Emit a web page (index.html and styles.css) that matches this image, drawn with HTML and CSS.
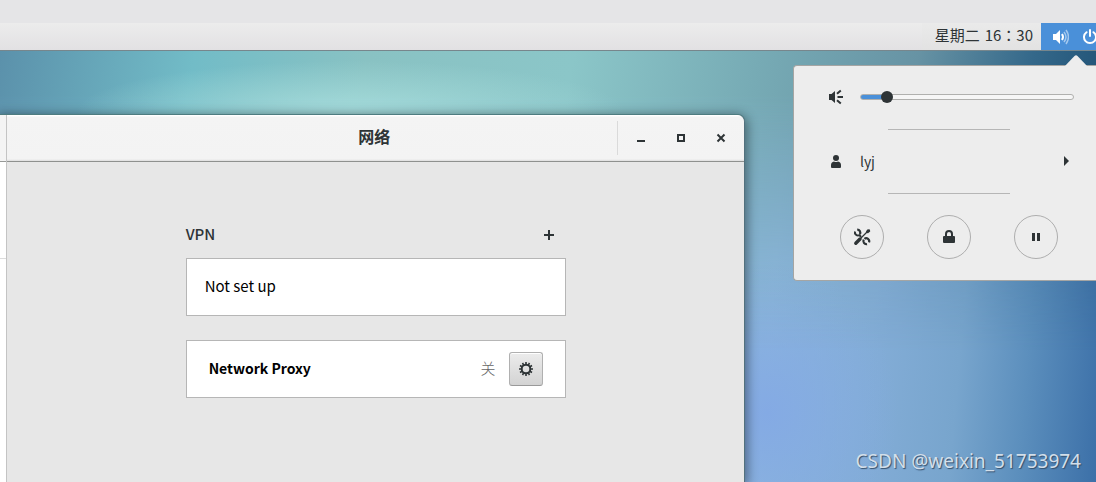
FILE: index.html
```html
<!DOCTYPE html>
<html lang="zh-CN">

<head>
<meta charset="utf-8">
<title>网络</title>
<meta name="viewport" content="width=device-width, initial-scale=1">
<link rel="stylesheet" href="styles.css">
</head>

<body>

<div class="strip"></div>

<header class="panel">
  <button class="clock" type="button" lang="zh-TW"><span>星期二</span><span>16：30</span></button>
  <button class="status" type="button" aria-label="System menu">
    <svg width="16" height="16" viewBox="0 0 16 16">
      <path d="M0 5h3l4-4v14l-4-4H0z" fill="#fff"/>
      <path d="M9 5q2 3 0 6" fill="none" stroke="#fff" stroke-width="2"/>
      <path d="M11 3q4 5 0 10M13 1q5 7 0 14" fill="none" stroke="#a4c8ee" stroke-width="1.5"/>
    </svg>
    <svg width="16" height="16" viewBox="0 0 16 16">
      <path d="M4.500 3.200a6 6 0 1 0 7 0M8 1v6" fill="none" stroke="#fff" stroke-width="2" stroke-linecap="round"/>
    </svg>
  </button>
</header>

<main class="desktop">

  <section class="window">
    <div class="sidebar">
      <div class="sidebar-head"></div>
      <div class="sidebar-item"></div>
    </div>
    <div class="content">
      <div class="titlebar">
        <h1 class="title">网络</h1>
        <div class="win-buttons">
          <button type="button" aria-label="Minimize">
            <svg width="16" height="16" viewBox="0 0 16 16"><path d="M4 10h8v2H4z"/></svg>
          </button>
          <button type="button" aria-label="Maximize">
            <svg width="16" height="16" viewBox="0 0 16 16"><path d="M4 4h8v8H4zM6 6v4h4V6z" fill-rule="evenodd"/></svg>
          </button>
          <button type="button" aria-label="Close">
            <svg width="16" height="16" viewBox="0 0 16 16"><path d="M4.500 4.500l7 7M11.500 4.500l-7 7" stroke="#2e3436" stroke-width="2"/></svg>
          </button>
        </div>
      </div>

      <div class="settings">
        <div class="group-head">
          <h2>VPN</h2>
          <button class="add" type="button" aria-label="Add VPN">
            <svg width="16" height="16" viewBox="0 0 16 16"><path d="M7 3h2v4h4v2H9v4H7V9H3V7h4z"/></svg>
          </button>
        </div>
        <div class="card">Not set up</div>
        <div class="card proxy">
          <span class="proxy-name">Network Proxy</span>
          <span class="proxy-state">关</span>
          <button class="gear" type="button" aria-label="Proxy settings">
            <svg width="16" height="16" viewBox="0 0 16 16">
              <circle cx="8" cy="8" r="4.300" fill="none" stroke="#2e3436" stroke-width="2"/>
              <path d="M8 1v2.500M8 12.500V15M1 8h2.500M12.500 8H15M4.500 2l1.200 2.100M11.500 2l-1.200 2.100M4.500 14l1.200-2.100M11.500 14l-1.200-2.100M2 4.500l2.100 1.200M14 4.500l-2.100 1.200M2 11.500l2.100-1.200M14 11.500l-2.100-1.200" fill="none" stroke="#2e3436" stroke-width="1.600"/>
            </svg>
          </button>
        </div>
      </div>
    </div>
  </section>

  <section class="menu">
    <svg class="arrow" width="24" height="13" viewBox="0 0 24 13">
      <path d="M0 13L10.500 2q1.500-1.500 3 0L24 13z" fill="#ededed"/>
    </svg>
    <div class="row volume">
      <label for="volume" aria-label="Volume">
        <svg width="16" height="16" viewBox="0 0 16 16">
          <path d="M1 5h2.500L7 2v12l-3.500-3H1z"/>
          <path d="M9.500 8H15M9 4.800L12.800 1.500M9 11.200l3.800 3.300" stroke="#2e3436" stroke-width="2"/>
        </svg>
      </label>
      <input class="slider" id="volume" type="range" min="0" max="100" value="10">
    </div>
    <hr>
    <button class="row user" type="button">
      <svg width="16" height="16" viewBox="0 0 16 16">
        <circle cx="8" cy="5" r="3"/>
        <path d="M3 15v-3q0-3 3-3.500q2 1 4 0q3 .5 3 3.500v2q0 1-1 1H4q-1 0-1-1z"/>
      </svg>
      <span class="user-name">lyj</span>
      <svg class="expand" width="16" height="16" viewBox="0 0 16 16"><path d="M6 3l5 5-5 5z"/></svg>
    </button>
    <hr>
    <div class="actions">
      <button type="button" aria-label="Settings">
        <svg width="18" height="18" viewBox="0 0 18 18">
          <path d="M2 3.500a3.200 3.200 0 0 0 4.500 3.700l1.600 1.700" fill="none" stroke="#2e3436" stroke-width="2"/>
          <path d="M4.200 1.600a3 3 0 0 1 2.600 4.600" fill="none" stroke="#2e3436" stroke-width="2.200"/>
          <path d="M16 14.300a3 3 0 0 0-4.600-3.500" fill="none" stroke="#2e3436" stroke-width="2.200"/>
          <path d="M10.800 11.600a3 3 0 0 0 3.200 4.500" fill="none" stroke="#2e3436" stroke-width="2.200"/>
          <path d="M7 11L2.800 15.200" stroke="#2e3436" stroke-width="3.400" stroke-linecap="round"/>
          <path d="M7.500 10.500L14 4" stroke="#2e3436" stroke-width="1.300"/>
          <path d="M13 3.300l1.700-2 2.200.3.300 2-2.200 1.700-1.500-.4z"/>
        </svg>
      </button>
      <button type="button" aria-label="Lock">
        <svg width="16" height="16" viewBox="0 0 16 16">
          <path d="M2 8q0-1 1-1h10q1 0 1 1v5q0 1-1 1H3q-1 0-1-1z"/>
          <path d="M5 8V5q0-3 3-3t3 3v3" fill="none" stroke="#2e3436" stroke-width="2"/>
        </svg>
      </button>
      <button type="button" aria-label="Suspend">
        <svg width="16" height="16" viewBox="0 0 16 16"><path d="M4 4h3v8H4zM9 4h3v8H9z"/></svg>
      </button>
    </div>
  </section>

  <p class="watermark">CSDN @weixin_51753974</p>

</main>

</body>

</html>
```
FILE: styles.css
```css
* {
  box-sizing: border-box;
}

body {
  margin: 0;
  min-height: 100vh;
  display: flex;
  flex-direction: column;
  overflow: hidden;
  font-family: "Noto Sans CJK SC", "Noto Sans", sans-serif;
  font-size: 15px;
  line-height: 20px;
  color: #2e3436;
}

svg {
  display: block;
  flex: none;
  fill: #2e3436;
}

button {
  margin: 0;
  padding: 0;
  border: none;
  background: none;
  font: inherit;
  color: inherit;
  cursor: pointer;
}

/* top panel */

.strip {
  height: 23px;
  background-color: #e5e5e7;
}

.panel {
  display: flex;
  justify-content: flex-end;
  height: 28px;
  border-bottom: 1px solid #77868c;
  background: linear-gradient(#ececec, #e2e1e3);
}

.clock {
  display: flex;
  align-items: center;
  gap: 5px;
  padding: 0 8px 4px 13px;
  background: linear-gradient(#eaeaea, #e2e2e2);
  font-family: "Noto Sans CJK TC", sans-serif;
}

.status {
  display: flex;
  align-items: center;
  gap: 13px;
  width: 55px;
  padding-left: 12px;
  overflow: hidden;
  background-color: #4a90d9;
}

/* desktop and wallpaper */

.desktop {
  position: relative;
  flex: 1;
  overflow: hidden;
  background:
    radial-gradient(ellipse 12% 35% at 70% 84%, #84aae4 0%, transparent 100%),
    linear-gradient(95deg, #83b6d2 60%, #8cb6dc 70%, #82acd6 80%, #78a5cd 87%, #5c8fbd 93%, #3c70a8 100%);
}

.desktop::before {
  content: "";
  position: absolute;
  inset: 0 0 auto 0;
  height: 300px;
  background:
    radial-gradient(ellipse 25% 50px at 32% 60px, #a4dbda 0%, transparent 100%),
    linear-gradient(100deg, #5b91ab 0%, #72bcc7 17%, #89c2c3 32%, #8bc6c8 50%, #77abb5 66%, #6793a4 80%, #34688a 90%, #1c4c70 99%);
  -webkit-mask-image: linear-gradient(#000 15%, rgba(0, 0, 0, .2) 70%, transparent);
  mask-image: linear-gradient(#000 15%, rgba(0, 0, 0, .2) 70%, transparent);
}

/* network window */

.window {
  position: absolute;
  top: 64px;
  bottom: 0;
  left: 0;
  display: flex;
  width: 68%;
  border-right: 1px solid #52717e;
  border-top-right-radius: 7px;
  background-color: #e7e7e7;
  box-shadow: 0 -1px 0 #4e7c80, 0 2px 12px 2px rgba(0, 0, 0, .45);
}

.sidebar {
  width: 7px;
  border-right: 1px solid #c4c4c4;
  background-color: #fff;
}

.sidebar-head {
  height: 47px;
  border-bottom: 1px solid #979997;
  background-color: #f4f4f4;
}

.sidebar-item {
  height: 97px;
  border-bottom: 1px solid #dcdcdc;
}

.content {
  flex: 1;
}

.titlebar {
  display: grid;
  grid-template-columns: 1fr auto 1fr;
  align-items: center;
  height: 47px;
  padding-right: 3px;
  border-bottom: 1px solid #8f918f;
  border-top-right-radius: 7px;
  background: linear-gradient(#fff 1px, #f4f4f4 2px, #f3f3f3 44px, #dedede 46px);
}

.title {
  grid-column: 2;
  margin: 0;
  padding-bottom: 4px;
  font-size: 16px;
  font-weight: 700;
}

.win-buttons {
  justify-self: end;
  display: flex;
  padding-left: 3px;
  border-left: 1px solid #dadada;
}

.win-buttons button {
  display: grid;
  place-items: center;
  width: 40px;
  height: 34px;
}

.settings {
  width: 380px;
  max-width: 100%;
  margin: 0 auto;
  padding-top: 61px;
}

.group-head {
  display: flex;
  align-items: center;
  justify-content: space-between;
  height: 24px;
  margin-bottom: 11px;
  padding-right: 9px;
}

.group-head h2 {
  margin: 0;
  padding-bottom: 2px;
  font-size: 15px;
  font-weight: 500;
}

.card {
  display: flex;
  align-items: center;
  height: 58px;
  margin-bottom: 24px;
  padding: 0 22px 2px 18px;
  border: 1px solid #b6b6b6;
  background-color: #fff;
  color: #000;
}

.proxy {
  padding-bottom: 0;
  padding-left: 22px;
}

.proxy-name {
  flex: 1;
  padding-bottom: 2px;
  font-size: 14px;
  font-weight: 700;
}

.proxy-state {
  margin-right: 13px;
  padding-bottom: 2px;
  font-weight: 300;
  color: #666;
}

.gear {
  display: grid;
  place-items: center;
  width: 34px;
  height: 34px;
  border: 1px solid #b0b0b0;
  border-bottom-color: #999;
  border-radius: 3px;
  background: linear-gradient(#ececec, #d3d3d3);
  box-shadow: inset 0 1px #fff;
}

/* system menu */

.menu {
  position: absolute;
  top: 14px;
  right: 0;
  width: 303px;
  padding: 0 22px 21px 30px;
  border: 1px solid #a5a5a3;
  border-right: none;
  border-radius: 4px 0 0 4px;
  background-color: #ededed;
}

.arrow {
  position: absolute;
  top: -12px;
  right: 8px;
}

.row {
  display: flex;
  align-items: center;
  width: 100%;
  height: 63px;
  padding-left: 4px;
  padding-bottom: 2px;
}

.slider {
  -webkit-appearance: none;
  appearance: none;
  flex: 1;
  min-width: 0;
  height: 12px;
  margin: 0 0 0 16px;
  background: none;
}

.slider::-webkit-slider-runnable-track {
  height: 6px;
  border: 1px solid #b0b0ae;
  border-radius: 3px;
  background: linear-gradient(90deg, #4a90d9 12%, #f6f6f6 12%);
}

.slider::-webkit-slider-thumb {
  -webkit-appearance: none;
  width: 12px;
  height: 12px;
  margin-top: -4px;
  border-radius: 50%;
  background-color: #2e3436;
}

.user-name {
  flex: 1;
  margin-left: 16px;
  font-size: 14px;
  text-align: left;
}

hr {
  width: 122px;
  height: 1px;
  margin: 0 auto;
  border: none;
  background-color: #b6b6b6;
}

.actions {
  display: flex;
  justify-content: center;
  gap: 43px;
  margin-top: 21px;
}

.actions button {
  display: grid;
  place-items: center;
  width: 44px;
  height: 44px;
  border: 1px solid #aeaeae;
  border-radius: 50%;
}

.watermark {
  position: absolute;
  right: 15px;
  bottom: 8px;
  margin: 0;
  font-family: "Noto Sans", sans-serif;
  font-size: 19px;
  line-height: 26px;
  color: #d3dfea;
  text-shadow: 1px 1px 1px #35506c;
}
```
